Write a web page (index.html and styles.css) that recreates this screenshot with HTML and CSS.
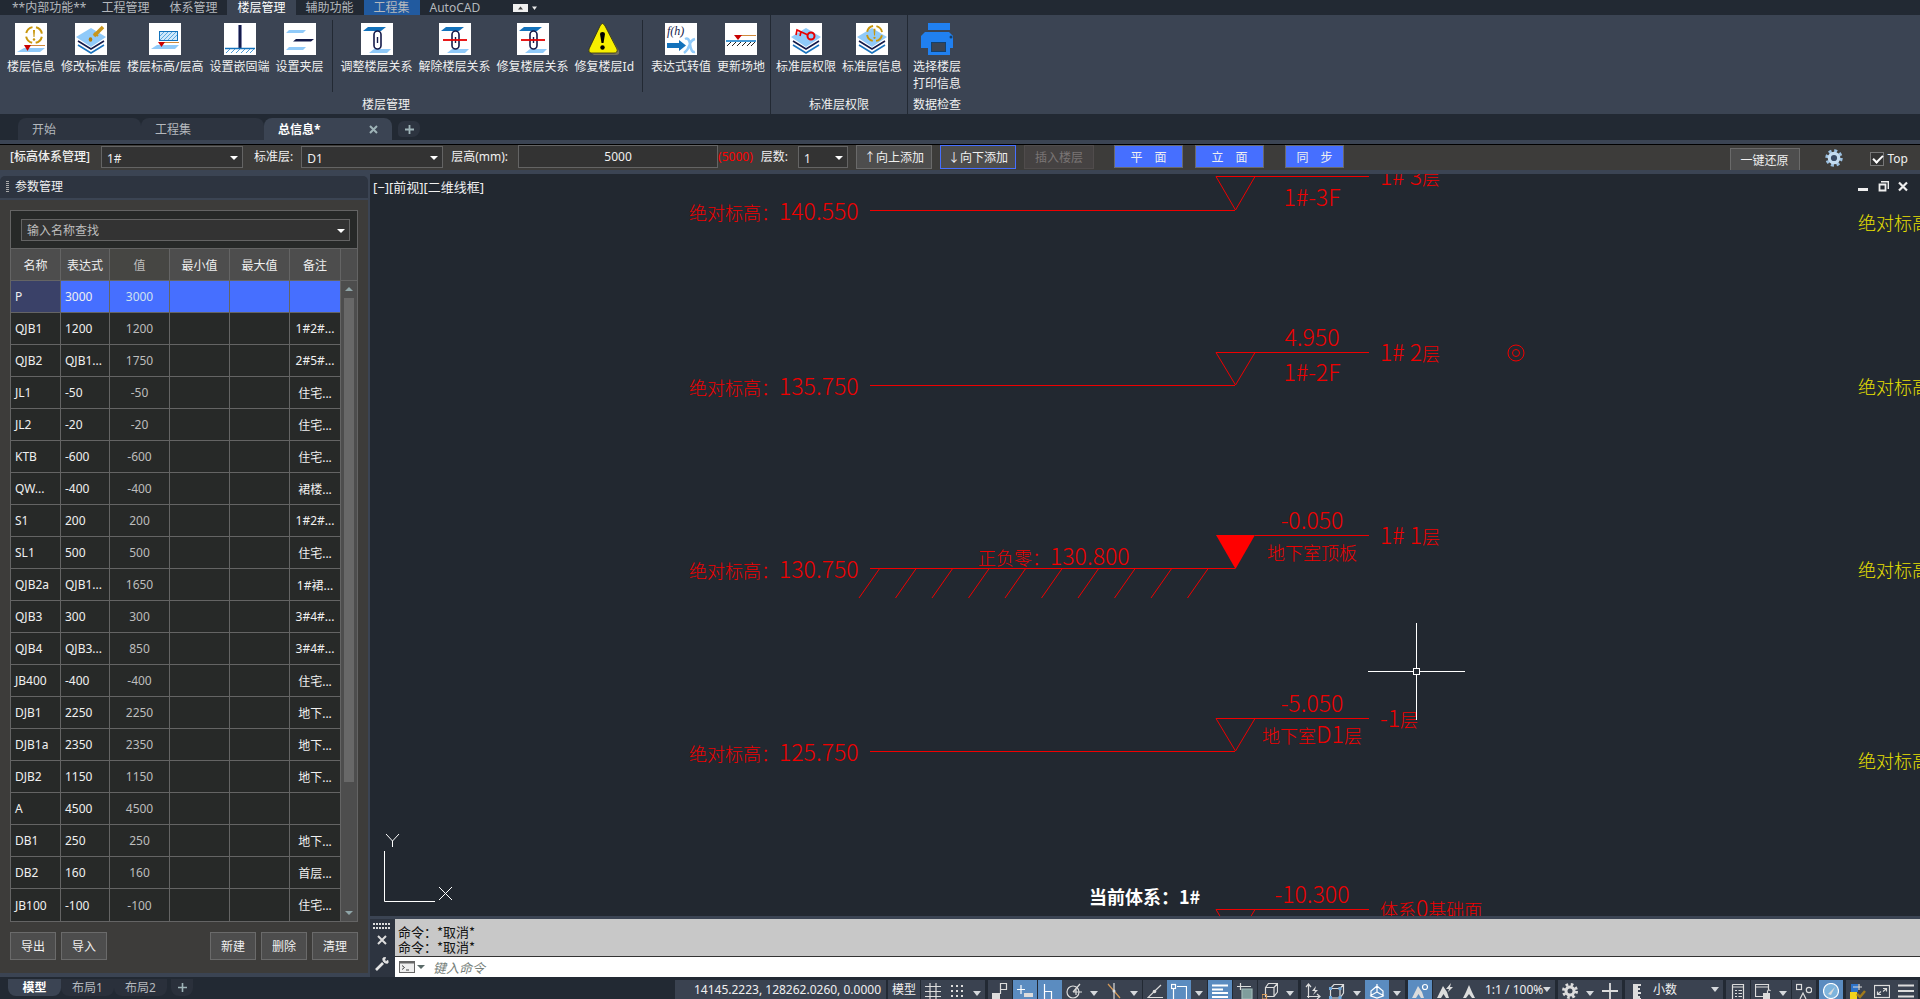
FILE: index.html
```html
<!DOCTYPE html>
<html lang="zh-CN">
<head>
  <meta charset="UTF-8">
  <meta name="viewport" content="width=device-width, initial-scale=1.0">
  <title>总信息</title>
  <link rel="stylesheet" href="styles.css">
</head>
<body>

  <!-- shared symbols -->
  <svg class="defs" width="0" height="0">
    <symbol id="stack" viewBox="0 0 32 32">
      <path d="M16 5L31 14L16 24L1 14Z" fill="#90caf9"/>
      <path d="M3 18L16 26L29 18" fill="none" stroke="#141a4a" stroke-width="1.6"/>
      <path d="M3 22L16 30L29 22" fill="none" stroke="#1a73bd" stroke-width="1.6"/>
    </symbol>
    <symbol id="link" viewBox="0 0 32 32">
      <path d="M7 4H25L20 8H2Z" fill="#1372bb"/>
      <path d="M13 26H30L26 30H8Z" fill="#90caf9"/>
      <rect x="13" y="8" width="7" height="18" rx="3.5" fill="#fff" stroke="#141a4a" stroke-width="1.6"/>
      <path d="M16.500 14V20" stroke="#141a4a" stroke-width="1.4"/>
    </symbol>
    <symbol id="ring" viewBox="0 0 20 20">
      <circle cx="10" cy="10" r="8" fill="none" stroke="#c8960c" stroke-width="2" stroke-dasharray="8.970 3.600" stroke-dashoffset="-1.800"/>
      <path d="M9 5H11L10.500 12H9.500Z" fill="#c8960c"/>
      <circle cx="10" cy="14.500" r="1.200" fill="#c8960c"/>
    </symbol>
    <symbol id="caret" viewBox="0 0 8 5"><path d="M0 0H8L4 5Z" fill="#d5d8dc"/></symbol>
  </svg>

  <nav class="menu">
    <button class="menu-tab inner">**内部功能**</button>
    <button class="menu-tab">工程管理</button>
    <button class="menu-tab">体系管理</button>
    <button class="menu-tab active">楼层管理</button>
    <button class="menu-tab">辅助功能</button>
    <button class="menu-tab project">工程集</button>
    <button class="menu-tab">AutoCAD</button>
    <button class="menu-fold" aria-label="折叠"><svg width="25" height="8" viewBox="0 0 25 8"><rect width="15" height="8" fill="#f0f0f0"/><path d="M5 5.500H10L7.500 2.500Z" fill="#444"/><path d="M19 2.500H24L21.500 6Z" fill="#e8e8e8"/></svg></button>
  </nav>

  <section class="ribbon">
    <div class="panel">
      <div class="tools">
        <button class="tool">
          <svg viewBox="0 0 32 32"><rect width="32" height="32" fill="#fff"/><path d="M9 25H30L25 29H2Z" fill="#90caf9"/><path d="M14 22.500H30" stroke="#d08a3c"/><path d="M9 22H16L12.500 28Z" fill="#c80000"/><use href="#ring" x="9" y="2" width="20" height="20"/></svg>
          <span>楼层信息</span>
        </button>
        <button class="tool">
          <svg viewBox="0 0 32 32"><rect width="32" height="32" fill="#fff"/><use href="#stack"/><path d="M28 4L19 13" stroke="#c8961c" stroke-width="3.500"/><path d="M19 10L23 13" stroke="#c8961c" stroke-width="2"/><ellipse cx="15.500" cy="16.500" rx="1.800" ry="2.300" fill="#b07c10"/></svg>
          <span>修改标准层</span>
        </button>
        <button class="tool">
          <svg viewBox="0 0 32 32"><rect width="32" height="32" fill="#fff"/><path d="M8 22H30L26 26H2Z" fill="#90caf9"/><rect x="10.500" y="8.500" width="18" height="9" fill="#cfe8fb" stroke="#1372bb"/><path d="M11 13L15 9M11 17L19 9M15 17L23 9M19 17L27 9M23 17L28 12" stroke="#5aa9e0"/><path d="M14 19.500H30" stroke="#d08a3c"/><path d="M9 19H16L12.500 24Z" fill="#c80000"/></svg>
          <span>楼层标高/层高</span>
        </button>
        <button class="tool">
          <svg viewBox="0 0 32 32"><rect width="32" height="32" fill="#fff"/><rect x="14" y="2" width="4" height="23" fill="#7d82a5"/><rect x="15" y="2" width="2" height="23" fill="#141a4a"/><path d="M1 25.500H31" stroke="#1372bb" stroke-width="1.500"/><path d="M2 30L6 26M7 30L11 26M12 30L16 26M17 30L21 26M22 30L26 26M26 30L30 26" stroke="#4b9bd8"/></svg>
          <span>设置嵌固端</span>
        </button>
        <button class="tool">
          <svg viewBox="0 0 32 32"><rect width="32" height="32" fill="#fff"/><path d="M5 7H22L19 10H2ZM5 24H22L19 27H2Z" fill="#90caf9"/><path d="M12 16H30L27 18.500H9Z" fill="#141a4a"/></svg>
          <span>设置夹层</span>
        </button>
        <i class="sep"></i>
        <button class="tool">
          <svg viewBox="0 0 32 32"><rect width="32" height="32" fill="#fff"/><use href="#link"/></svg>
          <span>调整楼层关系</span>
        </button>
        <button class="tool">
          <svg viewBox="0 0 32 32"><rect width="32" height="32" fill="#fff"/><use href="#link"/><path d="M4 17H28" stroke="#e60000" stroke-width="1.800"/></svg>
          <span>解除楼层关系</span>
        </button>
        <button class="tool">
          <svg viewBox="0 0 32 32"><rect width="32" height="32" fill="#fff"/><use href="#link"/><path d="M4 17H28" stroke="#e60000" stroke-width="1.800"/></svg>
          <span>修复楼层关系</span>
        </button>
        <button class="tool">
          <svg viewBox="0 0 32 32"><path d="M17 3L31 28Q32 32 28 32H6L3 30Z" fill="#77735f"/><path d="M12.500 2Q14.500-1 16.500 2L29 26Q30 30 26 30H3Q0 30 1 26Z" fill="#f8f000" stroke="#2a2a10" stroke-width=".8"/><path d="M12 11Q12 9 14.500 9T17 11L15.500 20H13.500Z" fill="#000"/><circle cx="14.500" cy="24.500" r="2.200" fill="#000"/></svg>
          <span>修复楼层Id</span>
        </button>
        <i class="sep"></i>
        <button class="tool">
          <svg viewBox="0 0 32 32"><rect width="32" height="32" fill="#fff"/><text x="2" y="12" class="formula">f(h)</text><path d="M2 20H14V17L21 22.500L14 28V25H2Z" fill="#1372bb"/><path d="M20 16Q24 14 25 21Q26 30 30 29M30 16Q26 17 24.500 22T19 30" fill="none" stroke="#90caf9" stroke-width="2.500"/></svg>
          <span>表达式转值</span>
        </button>
        <button class="tool">
          <svg viewBox="0 0 32 32"><rect width="32" height="32" fill="#fff"/><path d="M13 12.500H31" stroke="#d08a3c"/><path d="M9 12H17L13 17Z" fill="#c80000"/><path d="M1 18H31" stroke="#1a82cc" stroke-width="1.600"/><path d="M2 23L6 19M7 23L11 19M12 23L16 19M17 23L21 19M22 23L26 19M26 23L30 19" stroke="#222"/></svg>
          <span>更新场地</span>
        </button>
      </div>
      <h2>楼层管理</h2>
    </div>
    <div class="panel">
      <div class="tools">
        <button class="tool">
          <svg viewBox="0 0 32 32"><rect width="32" height="32" fill="#fff"/><use href="#stack"/><path d="M18 12L7 7L6 12M11 9L10 13" fill="none" stroke="#e80000" stroke-width="1.600"/><circle cx="21" cy="13" r="3.500" fill="none" stroke="#e80000" stroke-width="2"/></svg>
          <span>标准层权限</span>
        </button>
        <button class="tool">
          <svg viewBox="0 0 32 32"><rect width="32" height="32" fill="#fff"/><use href="#stack"/><use href="#ring" x="9" y="1" width="19" height="19"/></svg>
          <span>标准层信息</span>
        </button>
      </div>
      <h2>标准层权限</h2>
    </div>
    <div class="panel">
      <div class="tools">
        <button class="tool">
          <svg viewBox="0 0 32 32"><path d="M7 0H29V7H7ZM4 9H28L32 13V25H29V32H7V25H0V13Z" fill="#2080f0"/><rect x="10.500" y="19.500" width="14" height="9" fill="#3b4453" stroke="#14406c"/><circle cx="30" cy="14" r="1.500" fill="#14406c"/></svg>
          <span>选择楼层<br>打印信息</span>
        </button>
      </div>
      <h2>数据检查</h2>
    </div>
  </section>

  <nav class="files">
    <button class="file">开始</button>
    <button class="file">工程集</button>
    <button class="file active">总信息*<svg width="9" height="9" viewBox="0 0 9 9"><path d="M1 1L8 8M8 1L1 8" stroke="#9fb4b8" stroke-width="2"/></svg></button>
    <button class="file-add" aria-label="新建"><svg width="9" height="9" viewBox="0 0 9 9"><path d="M4.500 0V9M0 4.500H9" stroke="#9fb4b8" stroke-width="1.800"/></svg></button>
  </nav>

  <form class="toolbar">
    <strong>[标高体系管理]</strong>
    <span class="combo system"><select aria-label="标高体系"><option>1#</option></select></span>
    <label for="std">标准层:</label>
    <span class="combo standard"><select id="std"><option>D1</option></select></span>
    <label for="height">层高(mm):</label>
    <input id="height" class="height" type="text" value="5000">
    <span class="hint">(5000)</span>
    <label for="count">层数:</label>
    <span class="combo count"><select id="count"><option>1</option></select></span>
    <button type="button" class="btn add">↑向上添加</button>
    <button type="button" class="btn add focus">↓向下添加</button>
    <button type="button" class="btn insert" disabled>插入楼层</button>
    <button type="button" class="btn blue first">平&emsp;面</button>
    <button type="button" class="btn blue">立&emsp;面</button>
    <button type="button" class="btn blue sync">同&emsp;步</button>
    <button type="button" class="btn restore">一键还原</button>
    <button type="button" class="gear" aria-label="设置"><svg width="18" height="18" viewBox="0 0 18 18"><circle cx="9" cy="9" r="7.200" fill="none" stroke="#9cc0e0" stroke-width="3" stroke-dasharray="3 2.650"/><circle cx="9" cy="9" r="4.700" fill="#3a4c66" stroke="#c4dcf0" stroke-width="3.200"/></svg></button>
    <label class="top"><input type="checkbox" checked>Top</label>
  </form>

  <main>
    <aside class="dock">
      <h1><i class="grip"></i>参数管理</h1>
      <div class="dock-body">
        <div class="params">
          <div class="search"><span class="combo"><input type="text" placeholder="输入名称查找" aria-label="输入名称查找"></span></div>
          <div class="grid">
            <table>
              <colgroup><col class="c-name"><col class="c-expr"><col><col><col><col class="c-note"></colgroup>
              <thead>
                <tr><th>名称</th><th>表达式</th><th class="dim">值</th><th>最小值</th><th>最大值</th><th>备注</th></tr>
              </thead>
              <tbody>
                <tr class="selected"><td>P</td><td>3000</td><td>3000</td><td></td><td></td><td></td></tr>
                <tr><td>QJB1</td><td>1200</td><td>1200</td><td></td><td></td><td>1#2#...</td></tr>
                <tr><td>QJB2</td><td>QJB1...</td><td>1750</td><td></td><td></td><td>2#5#...</td></tr>
                <tr><td>JL1</td><td>-50</td><td>-50</td><td></td><td></td><td>住宅...</td></tr>
                <tr><td>JL2</td><td>-20</td><td>-20</td><td></td><td></td><td>住宅...</td></tr>
                <tr><td>KTB</td><td>-600</td><td>-600</td><td></td><td></td><td>住宅...</td></tr>
                <tr><td>QW...</td><td>-400</td><td>-400</td><td></td><td></td><td>裙楼...</td></tr>
                <tr><td>S1</td><td>200</td><td>200</td><td></td><td></td><td>1#2#...</td></tr>
                <tr><td>SL1</td><td>500</td><td>500</td><td></td><td></td><td>住宅...</td></tr>
                <tr><td>QJB2a</td><td>QJB1...</td><td>1650</td><td></td><td></td><td>1#裙...</td></tr>
                <tr><td>QJB3</td><td>300</td><td>300</td><td></td><td></td><td>3#4#...</td></tr>
                <tr><td>QJB4</td><td>QJB3...</td><td>850</td><td></td><td></td><td>3#4#...</td></tr>
                <tr><td>JB400</td><td>-400</td><td>-400</td><td></td><td></td><td>住宅...</td></tr>
                <tr><td>DJB1</td><td>2250</td><td>2250</td><td></td><td></td><td>地下...</td></tr>
                <tr><td>DJB1a</td><td>2350</td><td>2350</td><td></td><td></td><td>地下...</td></tr>
                <tr><td>DJB2</td><td>1150</td><td>1150</td><td></td><td></td><td>地下...</td></tr>
                <tr><td>A</td><td>4500</td><td>4500</td><td></td><td></td><td></td></tr>
                <tr><td>DB1</td><td>250</td><td>250</td><td></td><td></td><td>地下...</td></tr>
                <tr><td>DB2</td><td>160</td><td>160</td><td></td><td></td><td>首层...</td></tr>
                <tr><td>JB100</td><td>-100</td><td>-100</td><td></td><td></td><td>住宅...</td></tr>
              </tbody>
            </table>
            <div class="scroll">
              <div class="scroll-head"></div>
              <div class="scroll-track"><i class="up"></i><i class="thumb"></i><i class="down"></i></div>
            </div>
          </div>
        </div>
        <div class="actions">
          <button class="btn">导出</button>
          <button class="btn">导入</button>
          <button class="btn right">新建</button>
          <button class="btn">删除</button>
          <button class="btn">清理</button>
        </div>
      </div>
    </aside>

    <section class="work">
      <div class="view">
        <svg class="drawing">
          <!-- each level is drawn around its own line, y = 0 -->
          <g class="level" transform="translate(0 36)">
            <path d="M500 .5H865M999-33.500H846L865.500 0L885-33.500"/>
            <text x="319" y="10">绝对标高：<tspan>140.550</tspan></text>
            <text x="942" y="-4" class="mid"><tspan>1#-3F</tspan></text>
            <text x="1010" y="-25"><tspan>1# 3</tspan>层</text>
          </g>
          <g class="level" transform="translate(0 211)">
            <path d="M500 .5H865M999-32.500H846L865.500 0L885-32.500"/>
            <text x="319" y="10">绝对标高：<tspan>135.750</tspan></text>
            <text x="942" y="-39" class="mid"><tspan>4.950</tspan></text>
            <text x="942" y="-4" class="mid"><tspan>1#-2F</tspan></text>
            <text x="1010" y="-24"><tspan>1# 2</tspan>层</text>
          </g>
          <g class="level" transform="translate(0 394)">
            <path d="M500 .5H865M999-32.500H885"/>
            <path class="solid" d="M846-33H885L865.500 1Z"/>
            <path d="M510 0L489 30M546.500 0L525.500 30M583 0L562 30M619.500 0L598.500 30M656 0L635 30M692.500 0L671.500 30M729 0L708 30M765.500 0L744.500 30M802 0L781 30M838.500 0L817.500 30"/>
            <text x="319" y="10">绝对标高：<tspan>130.750</tspan></text>
            <text x="608" y="-3">正负零：<tspan>130.800</tspan></text>
            <text x="942" y="-39" class="mid"><tspan>-0.050</tspan></text>
            <text x="942" y="-8" class="mid">地下室顶板</text>
            <text x="1010" y="-24"><tspan>1# 1</tspan>层</text>
          </g>
          <g class="level" transform="translate(0 577)">
            <path d="M500 .5H865M999-32.500H846L865.500 0L885-32.500"/>
            <text x="319" y="10">绝对标高：<tspan>125.750</tspan></text>
            <text x="942" y="-39" class="mid"><tspan>-5.050</tspan></text>
            <text x="942" y="-8" class="mid">地下室<tspan>D1</tspan>层</text>
            <text x="1010" y="-24"><tspan>-1</tspan>层</text>
          </g>
          <g class="level" transform="translate(0 768)">
            <path d="M999-32.500H846L865.500 0L885-32.500"/>
            <text x="942" y="-39" class="mid"><tspan>-10.300</tspan></text>
            <text x="1010" y="-25">体系<tspan>0</tspan>基础面</text>
          </g>
          <g class="level"><circle cx="1146" cy="179" r="8"/><circle cx="1146" cy="179" r="3.500"/></g>
          <g class="next">
            <text x="1488" y="56">绝对标高</text>
            <text x="1488" y="220">绝对标高</text>
            <text x="1488" y="403">绝对标高</text>
            <text x="1488" y="594">绝对标高</text>
          </g>
          <text class="current" x="719" y="730">当前体系：1#</text>
          <g class="cursor">
            <path d="M998 497.500H1043M1050 497.500H1095M1046.500 449V494M1046.500 501V546"/>
            <rect x="1043.500" y="494.500" width="6" height="6"/>
          </g>
          <g class="cursor">
            <path d="M14.500 677V727.500H65"/>
            <path d="M16 660L22.500 667L29 660M22.500 667V673M69 713L82 726M82 713L69 726"/>
          </g>
        </svg>
        <div class="view-bar">
          <span>[−][前视][二维线框]</span>
          <button aria-label="最小化"><svg width="11" height="11" viewBox="0 0 11 11"><rect y="7" width="10" height="3" fill="#eee"/></svg></button>
          <button aria-label="还原"><svg width="11" height="11" viewBox="0 0 11 11"><path d="M3 .5H10.500V8M1.500 3.500H7.500V9.500H1.500Z" fill="none" stroke="#eee" stroke-width="1.800"/></svg></button>
          <button aria-label="关闭"><svg width="11" height="11" viewBox="0 0 11 11"><path d="M1 1.500L9 9.500M9 1.500L1 9.500" stroke="#eee" stroke-width="2.200"/></svg></button>
        </div>
      </div>
      <div class="command">
        <div class="command-side">
          <svg width="17" height="6" viewBox="0 0 17 6"><path d="M0 1H17M0 5H17" stroke="#ddd" stroke-width="2" stroke-dasharray="2 1"/></svg>
          <svg width="10" height="10" viewBox="0 0 10 10"><path d="M1 1L9 9M9 1L1 9" stroke="#ddd" stroke-width="2"/></svg>
          <svg class="wrench" width="14" height="14" viewBox="0 0 14 14"><path d="M1 13L8 6" stroke="#e4e4e4" stroke-width="2.600"/><path d="M8 1A4 4 0 0 0 13 6L13 3.500L11 4.500L9.500 3L10.500 .5Z" fill="#e4e4e4" stroke="#e4e4e4"/></svg>
        </div>
        <div class="command-main">
          <div class="history">命令：*取消*<br>命令：*取消*</div>
          <div class="prompt">
            <svg width="26" height="12" viewBox="0 0 26 12"><rect x=".5" y=".5" width="15" height="11" fill="#eee" stroke="#666"/><path d="M1 1.500H15" stroke="#666" stroke-width="2"/><path d="M3 4.500L5.500 6.500L3 8.500M7 9H10" fill="none" stroke="#444"/><path d="M18 4H26L22 8Z" fill="#5a6a68"/></svg>
            <input type="text" placeholder="键入命令" aria-label="键入命令">
          </div>
        </div>
      </div>
    </section>
  </main>

  <footer>
    <div class="layouts">
      <button class="layout active">模型</button>
      <button class="layout">布局1</button>
      <button class="layout">布局2</button>
      <button class="layout plus" aria-label="新建布局"><svg width="9" height="9" viewBox="0 0 9 9"><path d="M4.500 0V9M0 4.500H9" stroke="#9fb4b8" stroke-width="1.600"/></svg></button>
    </div>
    <div class="status">
      <button class="coords">14145.2223, 128262.0260, 0.0000</button>
      <button class="space">模型</button>
      <div class="group">
        <button><svg viewBox="0 0 16 16"><path d="M5 0V16M11 0V16M0 3.500H16M0 8.500H16M0 13.500H16"/></svg></button>
        <button><svg viewBox="0 0 16 16"><path d="M2 3H15M2 8H15M2 13H15" stroke-width="2" stroke-dasharray="2 3"/></svg></button>
        <button class="drop"><svg><use href="#caret"/></svg></button>
      </div>
      <div class="group far"><button><svg viewBox="0 0 16 16"><path d="M8.500 11V.5H14.500V6.500H8.500"/><path d="M0 10H8V16H0Z" class="fill"/></svg></button></div>
      <div class="group"><button class="on"><svg viewBox="0 0 16 16"><path d="M4 2V11M0 6.500H8"/><path d="M7 10H16V14H7Z" class="fill"/></svg></button></div>
      <div class="group">
        <button class="on"><svg viewBox="0 0 16 16"><path d="M2.500 1V16M2.500 8.500H9.500V16"/></svg></button>
        <button><svg viewBox="0 0 16 16"><circle cx="7" cy="9" r="6"/><path d="M7 9L14 1M7 9H16M10 5V12"/></svg></button>
        <button class="drop"><svg><use href="#caret"/></svg></button>
        <button><svg viewBox="0 0 16 16"><path d="M2 1L14 15" stroke="#d59a58"/><path d="M8 0V16"/><circle cx="8" cy="8" r="1.500" class="fill"/></svg></button>
        <button class="drop"><svg><use href="#caret"/></svg></button>
      </div>
      <div class="group">
        <button><svg viewBox="0 0 16 16"><path d="M14 2L1 14.500H16"/><circle cx="7.500" cy="8.500" r="1.800" class="fill"/></svg></button>
        <button class="on"><svg viewBox="0 0 16 16"><path d="M6 3.500H15.500V16M2.500 6V16"/><rect x=".5" y="1.500" width="4" height="4"/></svg></button>
        <button class="drop"><svg><use href="#caret"/></svg></button>
      </div>
      <div class="group"><button class="on"><svg viewBox="0 0 16 16"><path d="M0 2.500H16M0 6.500H11M0 10H16M0 14H16" stroke-width="2"/></svg></button></div>
      <div class="group"><button><svg viewBox="0 0 16 16"><path d="M3.500 0V7M0 3.500H7M7 3.500H14"/><path d="M5 6H15V16H5Z" fill="#7f9d9c" stroke="#9fb8b6"/></svg></button></div>
      <div class="group">
        <button><svg viewBox="0 0 16 16"><path d="M3.500 4.500L6.500 .5H15.500V9L12 13.500H3.500ZM3.500 4.500H12V13M12 4.500L15.500 .5"/><path d="M0 11.500H4.500V16H0Z" stroke="#d59a58"/></svg></button>
        <button class="drop"><svg><use href="#caret"/></svg></button>
      </div>
      <div class="group far">
        <button><svg viewBox="0 0 16 16"><path d="M3.500 15V1M1 4L3.500 1L6 4M2 13.500H15M12 11L15 13.500L12 16"/><path d="M11 3L7 8H10L8 12L13 7H10Z" class="fill"/></svg></button>
        <button><svg viewBox="0 0 16 16"><path d="M1.500 5.500L5 1.500H14.500V10L11 15H1.500ZM1.500 5.500H11V15M11 5.500L14.500 1.500"/><path d="M0 4H3V7H0ZM9.500 4H12.500V7H9.500ZM0 13H3V16H0ZM9.500 13H12.500V16H9.500Z" fill="#6fa8dc" stroke="none"/></svg></button>
        <button class="drop"><svg><use href="#caret"/></svg></button>
        <button class="on"><svg viewBox="0 0 16 16"><path d="M8 1V9L1 13M8 9L15 13M8 3L2 8V13L8 15L14 13V8Z"/></svg></button>
        <button class="drop"><svg><use href="#caret"/></svg></button>
      </div>
      <div class="group far"><button class="on"><svg viewBox="0 0 16 16"><path d="M6 3L10 9L12 15H9L6.500 11L4 15H0L3 9Z" class="fill"/><circle cx="13" cy="4" r="2.500"/></svg></button></div>
      <div class="group">
        <button><svg viewBox="0 0 16 16"><path d="M6 3L10 9L12 15H9L6.500 11L4 15H0L3 9ZM14 0L9 6H12L11 9L16 4H13Z" class="fill"/></svg></button>
        <button><svg viewBox="0 0 16 16"><path d="M8 2L11 9L14 15H11L8 11L5 15H2L5 9Z" class="fill"/></svg></button>
        <button class="scale">1:1 / 100%<svg><use href="#caret"/></svg></button>
      </div>
      <div class="group far">
        <button><svg viewBox="0 0 16 16"><circle cx="8" cy="8" r="6.500" stroke-width="3" stroke-dasharray="2.600 2.500"/><circle cx="8" cy="8" r="4" stroke-width="3"/></svg></button>
        <button class="drop"><svg><use href="#caret"/></svg></button>
        <button><svg viewBox="0 0 16 16"><path d="M8 0V16M0 8H16" stroke-width="1.800"/></svg></button>
      </div>
      <div class="group far">
        <button><svg viewBox="0 0 16 16"><path d="M4 1H12V3H9V5H11V7H9V9H12V11H9V13H11V15H12V16H4Z" class="fill"/></svg></button>
        <button class="units">小数<svg><use href="#caret"/></svg></button>
      </div>
      <div class="group far"><button><svg viewBox="0 0 16 16"><path d="M2.500 1.500H13.500V16M2.500 1.500V16M2.500 4H13.500M5 7.500H7M8.500 7.500H12M5 10.500H7M8.500 10.500H12M5 13.500H7M8.500 13.500H12"/></svg></button></div>
      <div class="group">
        <button><svg viewBox="0 0 16 16"><path d="M8 13.500H.5V1.500H13.500V7M.5 4H13.500"/><path d="M8 10H15V16H8Z" class="fill"/><path d="M12.500 10V8Q14 6 15.500 8"/></svg></button>
        <button class="drop"><svg><use href="#caret"/></svg></button>
      </div>
      <div class="group"><button><svg viewBox="0 0 16 16"><rect x=".5" y="1.500" width="5" height="5"/><circle cx="13" cy="7" r="2.700"/><path d="M4 16L7 10L10 16"/></svg></button></div>
      <div class="group far"><button class="on"><svg viewBox="0 0 16 16"><circle cx="8" cy="8" r="7.500" fill="#7fb4dc"/><path d="M5 11L12 4L8 12Z" class="fill"/></svg></button></div>
      <div class="group far">
        <button><svg viewBox="0 0 16 16"><path d="M1 1H8V9H1Z" fill="#2f73c8" stroke="none"/><path d="M0 9H7V16H0Z" fill="#f1d31c" stroke="none"/><path d="M3 4H12M9 1V7" /><path d="M7 11L10 14L15 8" stroke="#a07a1c" stroke-width="2.500"/></svg></button>
        <button><svg viewBox="0 0 16 16"><rect x=".5" y="2.500" width="15" height="12"/><path d="M9 5.500H12.500V8.500M7 11.500H3.500V8.500M12 6L9 8.500M4 11L7 8.500"/></svg></button>
        <button><svg viewBox="0 0 16 16"><path d="M0 2.500H16M0 8H16M0 13.500H16" stroke-width="2"/></svg></button>
      </div>
    </div>
  </footer>

</body>
</html>
```

FILE: styles.css
```css
*{
  box-sizing: border-box;
}
body{
  margin: 0;
  height: 100vh;
  display: flex;
  flex-direction: column;
  overflow: hidden;
  background-color: #3b4453;
  color: #f0f0f0;
  font-family: "Noto Sans", "Noto Sans CJK SC", sans-serif;
  font-size: 12px;
}
button, input, select{
  font: inherit;
  color: inherit;
  margin: 0;
}
button{
  background: none;
  border: none;
  padding: 0;
  white-space: nowrap;
}
h1, h2{
  margin: 0;
  font-size: 12px;
  font-weight: normal;
}
.defs{
  position: absolute;
}

/* menu */
.menu{
  display: flex;
  height: 15px;
  padding-left: 3px;
  background-color: #222933;
  color: #b4b8bd;
}
.menu-tab{
  padding: 0 10px;
  height: 15px;
  line-height: 11px;
  overflow: hidden;
}
.menu-tab.inner{
  padding: 0 5px 0 9px;
}
.menu-tab.active{
  background-color: #3b4453;
  color: #fff;
}
.menu-tab.project{
  background-color: #215a9f;
}
.menu-fold{
  margin-left: 23px;
  line-height: 0;
}

/* ribbon */
.ribbon{
  display: flex;
  height: 99px;
  padding-left: 2px;
}
.panel{
  display: flex;
  flex-direction: column;
  padding: 0 5px 1px;
  border-right: 1px solid #222933;
}
.panel:last-child{
  border: none;
}
.tools{
  flex: 1;
  display: flex;
  gap: 6px;
  align-items: flex-start;
}
.tool{
  display: flex;
  flex-direction: column;
  align-items: center;
  padding-top: 8px;
  line-height: 17px;
}
.tool svg{
  width: 32px;
  height: 32px;
  margin-bottom: 3px;
}
.formula{
  font: italic 12px "Liberation Serif", serif;
  fill: #141a4a;
}
.sep{
  width: 1px;
  height: 72px;
  margin: 5px 2px 0;
  background-color: #222933;
}
.panel h2{
  line-height: 17px;
  text-align: center;
}

/* drawing tabs */
.files{
  display: flex;
  align-items: flex-end;
  height: 26px;
  padding-left: 18px;
  background-color: #222933;
}
.file{
  display: flex;
  align-items: center;
  justify-content: space-between;
  width: 123px;
  height: 22px;
  padding: 0 14px;
  border-radius: 8px 8px 0 0;
  background-color: #2d3440;
  color: #b4b8bd;
}
.file.active{
  width: 128px;
  background-color: #3b4453;
  color: #fff;
  font-weight: bold;
}
.file-add{
  width: 22px;
  height: 16px;
  margin: 0 0 3px 6px;
  border-radius: 6px 6px 8px 4px;
  background-color: #2d3440;
  line-height: 0;
}

/* toolbar */
.toolbar{
  display: flex;
  align-items: flex-start;
  height: 26px;
  margin: 4px 0;
  padding-left: 10px;
  border-top: 1px solid #000;
  background-color: #3d3c3a;
  line-height: 24px;
}
.toolbar label, .hint{
  white-space: nowrap;
}
.toolbar strong{
  width: 91px;
  font-weight: 500;
  white-space: nowrap;
}
.combo{
  position: relative;
  display: block;
}
.combo::after{
  content: "";
  position: absolute;
  right: 5px;
  top: 10px;
  border: 4px solid transparent;
  border-top-color: #fff;
  border-bottom: none;
}
.combo select, .combo input, .height{
  display: block;
  width: 100%;
  height: 22px;
  padding: 0 5px;
  border: 1px solid #646464;
  border-radius: 0;
  background-color: #333;
  appearance: none;
  outline: none;
}
.toolbar .combo{
  margin-top: 1px;
}
.toolbar .system, .toolbar .standard{
  width: 142px;
  margin-right: 8px;
}
.toolbar .system{
  margin-right: 11px;
}
.toolbar .standard{
  margin-left: 8px;
}
.toolbar .height{
  width: 200px;
  height: 23px;
  margin-left: 10px;
  text-align: center;
}
.toolbar .count{
  width: 50px;
  margin-left: 10px;
  margin-right: 8px;
}
.hint{
  color: #f00;
  margin-right: 8px;
}
.btn{
  height: 28px;
  width: 46px;
  border: 1px solid #6a6a6a;
  background-color: #4d4d4d;
}
.toolbar .btn{
  height: 24px;
  margin-right: 8px;
}
.toolbar .add{
  width: 76px;
}
.toolbar .focus{
  border-color: #466fff;
}
.toolbar .insert{
  width: 70px;
  border-color: #504c4c;
  background-color: #454242;
  color: #7a7575;
}
.toolbar .blue{
  width: 69px;
  height: 23px;
  margin-right: 12px;
  background-color: #466fff;
}
.toolbar .first{
  margin-left: 12px;
}
.toolbar .sync{
  width: 59px;
  margin-left: 9px;
}
.toolbar .restore{
  width: 70px;
  height: 22px;
  margin: 3px 25px 0 auto;
  border-bottom: none;
}
.gear{
  margin: 4px 27px 0 0;
  line-height: 0;
}
.top{
  display: flex;
  align-items: center;
  gap: 4px;
  margin: 2px 10px 0 0;
  padding-right: 2px;
}
.top input{
  appearance: none;
  width: 14px;
  height: 14px;
  border: 1px solid #777;
  background-color: #333;
}
.top input:checked::after{
  content: "";
  display: block;
  width: 8px;
  height: 4px;
  margin: 2px;
  border-left: 2px solid #fff;
  border-bottom: 2px solid #fff;
  transform: rotate(-45deg);
}

main{
  flex: 1;
  min-height: 0;
  display: flex;
  gap: 2px;
}

/* parameters */
.dock{
  width: 368px;
  flex-shrink: 0;
  display: flex;
  flex-direction: column;
  gap: 2px;
  padding: 2px 0 4px;
}
.dock h1{
  display: flex;
  align-items: center;
  gap: 6px;
  height: 22px;
  padding: 0 0 2px 6px;
  border-radius: 5px 5px 0 0;
  background-color: #2d3440;
}
.grip{
  width: 3px;
  height: 11px;
  background: repeating-linear-gradient(#aaa 0 1px, transparent 1px 2px);
}
.dock-body{
  flex: 1;
  padding: 10px;
  background-color: #3d3c3a;
}
.params{
  border: 1px solid #646464;
  background-color: #272928;
}
.search{
  padding: 8px 7px 7px 10px;
}
.search input::placeholder{
  color: #bdbdbd;
}
.grid{
  display: flex;
  border-top: 1px solid #646464;
}
table{
  flex: 1;
  table-layout: fixed;
  width: 0;
  border-collapse: separate;
  border-spacing: 0;
}
col{
  width: 60px;
}
.c-name{
  width: 50px;
}
.c-expr{
  width: 49px;
}
.c-note{
  width: auto;
}
th, td{
  height: 32px;
  padding: 0;
  border-right: 1px solid #646464;
  border-bottom: 1px solid #646464;
  text-align: center;
  white-space: nowrap;
  overflow: hidden;
}
th{
  background-color: #4d4d4d;
  font-weight: normal;
}
th.dim{
  background-color: #464643;
  color: #bdbdbd;
}
tbody tr:last-child td{
  border-bottom: none;
}
td:nth-child(1), td:nth-child(2){
  text-align: left;
  padding-left: 4px;
}
td:nth-child(3){
  color: #bdbdbd;
}
.selected td{
  background-color: #466fff;
}
.selected td:first-child{
  background-color: #3a4168;
}
.selected td:nth-child(3){
  color: #cfe0f0;
}
.scroll{
  width: 16px;
  display: flex;
  flex-direction: column;
  background-color: #4d4d4d;
}
.scroll-head{
  height: 32px;
  border-bottom: 1px solid #646464;
}
.scroll-track{
  flex: 1;
  display: flex;
  flex-direction: column;
  align-items: center;
  padding: 6px 0;
}
.up, .down{
  border: 4px solid transparent;
}
.up{
  border-bottom-color: #8fa5a8;
  border-top: none;
}
.down{
  border-top-color: #8fa5a8;
  border-bottom: none;
  margin-top: auto;
}
.thumb{
  width: 10px;
  height: 77%;
  margin-top: 7px;
  background-color: #686868;
}
.actions{
  display: flex;
  gap: 5px;
  margin-top: 10px;
}
.actions .right{
  margin-left: auto;
}

/* drawing area */
.work{
  flex: 1;
  min-width: 0;
  display: flex;
  flex-direction: column;
  gap: 3px;
}
.view{
  position: relative;
  flex: 1;
  min-height: 0;
  background-color: #222830;
}
.view-bar{
  position: absolute;
  top: 3px;
  left: 3px;
  right: 11px;
  display: flex;
  align-items: center;
  gap: 9px;
  font-size: 13px;
}
.view-bar span{
  margin-right: auto;
}
.view-bar button{
  line-height: 0;
}
.drawing{
  display: block;
  position: absolute;
  width: 100%;
  height: 100%;
  font-family: "Noto Sans CJK SC", sans-serif;
  font-size: 18px;
  font-weight: 300;
}
.level path, .level circle{
  fill: none;
  stroke: #f00000;
}
.level .solid{
  fill: #f00;
  stroke: none;
}
.level text{
  fill: #f00000;
}
.level tspan{
  font-size: 23px;
}
.mid{
  text-anchor: middle;
}
.next{
  fill: #e8e000;
}
.current{
  fill: #fff;
  font-weight: bold;
}
.cursor{
  fill: none;
  stroke: #fff;
}

/* command line */
.command{
  display: flex;
  height: 58px;
}
.command-side{
  width: 25px;
  display: flex;
  flex-direction: column;
  align-items: center;
  gap: 6px;
  padding: 4px 2px 6px 0;
  background-color: #2d3440;
}
.wrench{
  margin-top: auto;
}
.command-main{
  flex: 1;
  display: flex;
  flex-direction: column;
  font-family: "Noto Sans CJK SC", sans-serif;
  font-size: 13px;
}
.history{
  flex: 1;
  padding: 5px 3px 0;
  background-color: #c8c8c8;
  color: #111;
  line-height: 15px;
}
.prompt{
  display: flex;
  align-items: center;
  gap: 8px;
  height: 21px;
  padding-left: 4px;
  border-top: 1px solid #333;
  background-color: #fff;
}
.prompt input{
  flex: 1;
  border: none;
  padding: 0;
  outline: none;
  background: none;
  color: #111;
  font-style: italic;
}
.prompt input::placeholder{
  color: #76807a;
}

/* status bar */
footer{
  display: flex;
  height: 22px;
  padding-top: 2px;
  background-color: #222933;
}
.layouts{
  display: flex;
  padding-left: 8px;
  margin-right: auto;
}
.layout{
  width: 53px;
  height: 17px;
  line-height: 17px;
  border-radius: 0 0 8px 8px;
  background-color: #2a303b;
  color: #b4b8bd;
}
.layout.active{
  background-color: #3b4453;
  color: #fff;
  font-weight: bold;
}
.layout.plus{
  width: 22px;
  margin-left: 4px;
  line-height: 0;
}
.status{
  display: flex;
  gap: 1px;
  padding: 1px 2px 0 0;
}
.status button{
  width: 24px;
  height: 19px;
  padding-top: 3px;
  line-height: 0;
  overflow: hidden;
  background-color: #3a4250;
}
.status svg{
  width: 16px;
  height: 16px;
  fill: none;
  stroke: #dcdcdc;
  stroke-width: 1.2;
}
.status svg .fill{
  fill: #dcdcdc;
  stroke: none;
}
.status .on{
  background-color: #5b8cc0;
}
.status .on svg{
  stroke: #fff;
}
.status .drop{
  width: 16px;
}
.status .drop svg, .status .scale svg, .status .units svg{
  width: 8px;
  height: 5px;
  stroke: none;
}
.status .drop svg{
  margin-top: 5px;
  display: block;
  margin-left: 4px;
}
.group{
  display: flex;
}
.far{
  margin-left: 2px;
}
.status .coords{
  width: 211px;
  padding: 0 5px 0 0;
  line-height: 19px;
  text-align: right;
}
.status .space{
  width: 32px;
  padding: 0;
  line-height: 19px;
  margin-left: 1px;
}
.status .scale, .status .units{
  display: flex;
  align-items: center;
  justify-content: space-between;
  width: 74px;
  padding: 0 4px;
  line-height: 19px;
}
```
